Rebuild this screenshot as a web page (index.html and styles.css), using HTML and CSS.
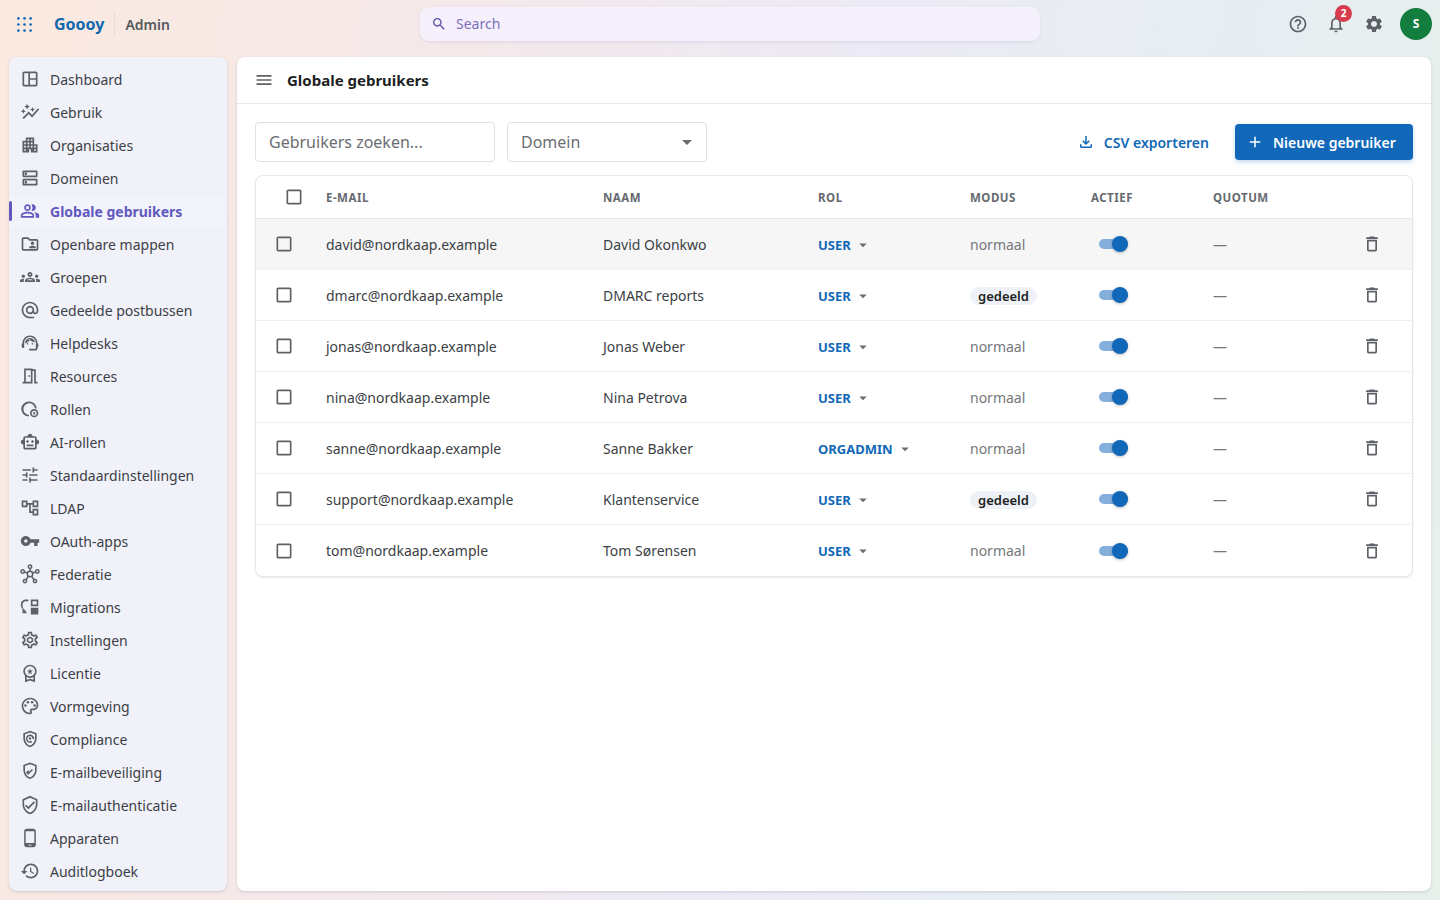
FILE: index.html
```html
<!DOCTYPE html>
<html lang="nl">

<head>
    <meta charset="UTF-8">
    <meta name="viewport" content="width=device-width, initial-scale=1.0">
    <title>Globale gebruikers</title>

    <link rel="stylesheet" href="styles.css">
</head>

<body>

    <header class="topbar">
        <div class="topbar--brand">
            <svg class="apps-icon" viewBox="0 0 16 16"><g>
                <circle cx="1.5" cy="1.5" r="1.4"/><circle cx="8" cy="1.5" r="1.4"/><circle cx="14.5" cy="1.5" r="1.4"/>
                <circle cx="1.5" cy="8" r="1.4"/><circle cx="8" cy="8" r="1.4"/><circle cx="14.5" cy="8" r="1.4"/>
                <circle cx="1.5" cy="14.5" r="1.4"/><circle cx="8" cy="14.5" r="1.4"/><circle cx="14.5" cy="14.5" r="1.4"/>
            </g></svg>
            <span class="logo">Goooy</span>
            <span class="topbar--product">Admin</span>
        </div>
        <div class="search">
            <svg class="search--icon" viewBox="0 0 24 24"><path d="M15.5 14h-.79l-.28-.27C15.41 12.59 16 11.11 16 9.5 16 5.91 13.09 3 9.5 3S3 5.91 3 9.5 5.91 16 9.5 16c1.61 0 3.09-.59 4.23-1.57l.27.28v.79l5 4.99L20.49 19l-4.99-5zm-6 0C7.01 14 5 11.99 5 9.5S7.01 5 9.5 5 14 7.01 14 9.5 11.99 14 9.5 14z"/></svg>
            <span>Search</span>
        </div>
        <div class="topbar--actions">
            <svg class="top-icon" viewBox="0 0 24 24"><path d="M11 18h2v-2h-2v2zm1-16C6.48 2 2 6.48 2 12s4.48 10 10 10 10-4.48 10-10S17.52 2 12 2zm0 18c-4.41 0-8-3.59-8-8s3.59-8 8-8 8 3.59 8 8-3.59 8-8 8zm0-14c-2.21 0-4 1.79-4 4h2c0-1.1.9-2 2-2s2 .9 2 2c0 2-3 1.75-3 5h2c0-2.25 3-2.5 3-5 0-2.21-1.79-4-4-4z"/></svg>
            <span class="bell">
                <svg class="top-icon" viewBox="0 0 24 24"><path d="M12 22c1.1 0 2-.9 2-2h-4c0 1.1.9 2 2 2zm6-6v-5c0-3.07-1.63-5.64-4.5-6.32V4c0-.83-.67-1.5-1.5-1.5s-1.5.67-1.5 1.5v.68C7.64 5.36 6 7.92 6 11v5l-2 2v1h16v-1l-2-2zm-2 1H8v-6c0-2.48 1.51-4.5 4-4.5s4 2.02 4 4.5v6z"/></svg>
                <span class="bell--count">2</span>
            </span>
            <svg class="top-icon" viewBox="0 0 24 24"><path d="M19.14 12.94c.04-.3.06-.61.06-.94 0-.32-.02-.64-.07-.94l2.03-1.58c.18-.14.23-.41.12-.61l-1.92-3.32c-.12-.22-.37-.29-.59-.22l-2.39.96c-.5-.38-1.03-.7-1.62-.94l-.36-2.54c-.04-.24-.24-.41-.48-.41h-3.84c-.24 0-.43.17-.47.41l-.36 2.54c-.59.24-1.13.57-1.62.94l-2.39-.96c-.22-.08-.47 0-.59.22L2.74 8.87c-.12.21-.08.47.12.61l2.03 1.58c-.05.3-.09.63-.09.94s.02.64.07.94l-2.03 1.58c-.18.14-.23.41-.12.61l1.92 3.32c.12.22.37.29.59.22l2.39-.96c.5.38 1.03.7 1.62.94l.36 2.54c.05.24.24.41.48.41h3.84c.24 0 .44-.17.47-.41l.36-2.54c.59-.24 1.13-.56 1.62-.94l2.39.96c.22.08.47 0 .59-.22l1.92-3.32c.12-.22.07-.47-.12-.61l-2.01-1.58zM12 15.6c-1.98 0-3.6-1.62-3.6-3.6s1.62-3.6 3.6-3.6 3.6 1.62 3.6 3.6-1.62 3.6-3.6 3.6z"/></svg>
            <span class="avatar">S</span>
        </div>
    </header>

    <div class="shell">
        <nav class="sidebar">
            <a class="nav-item" href="#"><svg viewBox="0 0 24 24"><path d="M5 3h14c1.1 0 2 .9 2 2v14c0 1.1-.9 2-2 2H5c-1.100 0-2-.9-2-2V5c0-1.100.9-2 2-2zm0 2v14h5V5H5zm7 0v6h7V5h-7zm0 8v6h7v-6h-7z"/></svg>Dashboard</a>
            <a class="nav-item" href="#"><svg viewBox="0 0 24 24"><path d="M14.06 9.94 12 9l2.06-.94L15 6l.94 2.06L18 9l-2.06.94L15 12l-.94-2.06zM4 14l.94-2.06L7 11l-2.06-.94L4 8l-.94 2.06L1 11l2.06.94L4 14zm4.5-5 1.09-2.41L12 5.5 9.59 4.41 8.5 2 7.41 4.41 5 5.5l2.41 1.09L8.500 9zm-4 11.5 6-6.010 4 4L23 8.930l-1.410-1.410-7.090 7.970-4-4L3 19l1.500 1.500z"/></svg>Gebruik</a>
            <a class="nav-item" href="#"><svg viewBox="0 0 24 24"><path d="M17 11V3H7v4H3v14h8v-4h2v4h8V11h-4zM7 19H5v-2h2v2zm0-4H5v-2h2v2zm0-4H5V9h2v2zm4 4H9v-2h2v2zm0-4H9V9h2v2zm0-4H9V5h2v2zm4 8h-2v-2h2v2zm0-4h-2V9h2v2zm0-4h-2V5h2v2zm4 12h-2v-2h2v2zm0-4h-2v-2h2v2z"/></svg>Organisaties</a>
            <a class="nav-item" href="#"><svg viewBox="0 0 24 24"><path d="M19 15v4H5v-4h14m1-2H4c-.55 0-1 .45-1 1v6c0 .55.45 1 1 1h16c.55 0 1-.45 1-1v-6c0-.55-.45-1-1-1zM7 18.500c-.82 0-1.500-.67-1.500-1.500s.68-1.500 1.500-1.500 1.500.67 1.500 1.500-.67 1.500-1.500 1.500zM19 5v4H5V5h14m1-2H4c-.55 0-1 .45-1 1v6c0 .55.45 1 1 1h16c.55 0 1-.45 1-1V4c0-.55-.45-1-1-1zM7 8.500c-.82 0-1.500-.67-1.500-1.500S6.180 5.500 7 5.500s1.500.68 1.500 1.500S7.830 8.500 7 8.500z"/></svg>Domeinen</a>
            <a class="nav-item nav-item--active" href="#"><svg viewBox="0 0 24 24"><path d="M16.670 13.130C18.040 14.060 19 15.320 19 17v3h4v-3c0-2.180-3.570-3.470-6.330-3.870zM15 12c2.210 0 4-1.790 4-4s-1.790-4-4-4c-.47 0-.91.1-1.330.24C14.500 5.270 15 6.580 15 8s-.5 2.730-1.330 3.760c.42.14.86.24 1.330.24zM9 12c2.210 0 4-1.790 4-4s-1.790-4-4-4-4 1.790-4 4 1.790 4 4 4zm0-6c1.100 0 2 .9 2 2s-.9 2-2 2-2-.9-2-2 .9-2 2-2zM9 13c-2.670 0-8 1.340-8 4v3h16v-3c0-2.660-5.330-4-8-4zm6 5H3v-.99C3.200 16.290 6.300 15 9 15s5.800 1.290 6 2v1z"/></svg>Globale gebruikers</a>
            <a class="nav-item" href="#"><svg viewBox="0 0 24 24"><path d="M20 6h-8l-2-2H4c-1.100 0-2 .9-2 2v12c0 1.100.9 2 2 2h16c1.100 0 2-.9 2-2V8c0-1.100-.9-2-2-2zm0 12H4V6h5.170l2 2H20v10zm-5-5c1.100 0 2-.9 2-2s-.9-2-2-2-2 .9-2 2 .9 2 2 2zm-4 4h8v-1c0-1.330-2.670-2-4-2s-4 .67-4 2v1z"/></svg>Openbare mappen</a>
            <a class="nav-item" href="#"><svg viewBox="0 0 24 24"><path d="M4 13c1.100 0 2-.9 2-2s-.9-2-2-2-2 .9-2 2 .9 2 2 2zm1.130 1.100c-.37-.06-.74-.1-1.130-.1-.99 0-1.930.21-2.780.58C.48 14.900 0 15.620 0 16.430V18h4.500v-1.610c0-.83.23-1.610.63-2.290zM20 13c1.100 0 2-.9 2-2s-.9-2-2-2-2 .9-2 2 .9 2 2 2zm4 3.430c0-.81-.48-1.530-1.220-1.850-.85-.37-1.790-.58-2.780-.58-.39 0-.76.04-1.130.1.4.68.63 1.460.63 2.290V18H24v-1.570zM16.240 13.650c-1.170-.52-2.610-.9-4.240-.9-1.630 0-3.070.39-4.240.9C6.680 14.130 6 15.210 6 16.390V18h12v-1.610c0-1.180-.68-2.260-1.760-2.740zM8.070 16c.09-.23.13-.39.91-.69.97-.38 1.990-.56 3.020-.56s2.050.18 3.020.56c.77.3.81.46.91.69H8.070zM12 8c.55 0 1 .45 1 1s-.45 1-1 1-1-.45-1-1 .45-1 1-1m0-2c-1.660 0-3 1.340-3 3s1.340 3 3 3 3-1.340 3-3-1.340-3-3-3z"/></svg>Groepen</a>
            <a class="nav-item" href="#"><svg viewBox="0 0 24 24"><path d="M12 2C6.480 2 2 6.480 2 12s4.480 10 10 10h5v-2h-5c-4.340 0-8-3.660-8-8s3.660-8 8-8 8 3.660 8 8v1.430c0 .79-.71 1.570-1.500 1.570s-1.500-.78-1.500-1.570V12c0-2.760-2.240-5-5-5s-5 2.240-5 5 2.240 5 5 5c1.380 0 2.640-.56 3.540-1.470.65.89 1.770 1.470 2.960 1.470 1.970 0 3.500-1.600 3.500-3.570V12c0-5.520-4.480-10-10-10zm0 13c-1.660 0-3-1.340-3-3s1.340-3 3-3 3 1.340 3 3-1.340 3-3 3z"/></svg>Gedeelde postbussen</a>
            <a class="nav-item" href="#"><svg viewBox="0 0 24 24"><path d="M21 12.220C21 6.730 16.740 3 12 3c-4.690 0-9 3.650-9 9.280-.6.34-1 .98-1 1.720v2c0 1.100.9 2 2 2h1v-6.100c0-3.870 3.130-7 7-7s7 3.130 7 7V19h-8v2h8c1.100 0 2-.9 2-2v-1.220c.59-.31 1-.92 1-1.640v-2.300c0-.7-.41-1.310-1-1.620z"/><circle cx="9" cy="13" r="1"/><circle cx="15" cy="13" r="1"/><path d="M18 11.030C17.520 8.180 15.040 6 12.050 6c-3.030 0-6.290 2.510-6.030 6.450 2.470-1.010 4.330-3.210 4.860-5.890 1.310 2.630 4 4.440 7.120 4.470zM12 7.800c-.6 1.700-1.900 3.200-4 4.100.2-2 1.700-3.900 4-3.900z" fill-rule="evenodd"/></svg>Helpdesks</a>
            <a class="nav-item" href="#"><svg viewBox="0 0 24 24"><path d="M19 19V4h-4V3H5v16H3v2h12V6h2v15h4v-2h-2zm-6 0H7V5h6v14zm-3-8h2v2h-2z"/></svg>Resources</a>
            <a class="nav-item" href="#"><svg viewBox="0 0 24 24"><path d="M11 3a9 9 0 0 0-1 18l1.200-1.900A7 7 0 1 1 18 11l2 .6A9 9 0 0 0 11 3z"/><path d="M17 12a5 5 0 1 0 0 10 5 5 0 0 0 0-10zm0 2a3 3 0 1 1 0 6 3 3 0 0 1 0-6z"/><path d="M16 15.500h2V17h-2zM15.700 17.500h2.600v1.200h-2.600z"/></svg>Rollen</a>
            <a class="nav-item" href="#"><svg viewBox="0 0 24 24"><path d="M20 9V7c0-1.100-.9-2-2-2h-3c0-1.660-1.340-3-3-3S9 3.340 9 5H6c-1.100 0-2 .9-2 2v2c-1.660 0-3 1.340-3 3s1.340 3 3 3v4c0 1.100.9 2 2 2h12c1.100 0 2-.9 2-2v-4c1.660 0 3-1.340 3-3s-1.340-3-3-3zm-2 10H6V7h12v12zm-9-6c-.83 0-1.500-.67-1.500-1.500S8.170 10 9 10s1.500.67 1.500 1.500S9.830 13 9 13zm7.500-1.500c0 .83-.67 1.500-1.500 1.500s-1.500-.67-1.500-1.500.67-1.500 1.500-1.500 1.500.67 1.500 1.500zM8 15h8v2H8v-2z"/></svg>AI-rollen</a>
            <a class="nav-item" href="#"><svg viewBox="0 0 24 24"><path d="M3 17v2h6v-2H3zM3 5v2h10V5H3zm10 16v-2h8v-2h-8v-2h-2v6h2zM7 9v2H3v2h4v2h2V9H7zm14 4v-2H11v2h10zm-6-4h2V7h4V5h-4V3h-2v6z"/></svg>Standaardinstellingen</a>
            <a class="nav-item" href="#"><svg viewBox="0 0 24 24"><path d="M22 11V3h-7v3H9V3H2v8h7V8h2v10h4v3h7v-8h-7v3h-2V8h2v3h7zM7 9H4V5h3v4zm10 6h3v4h-3v-4zm0-10h3v4h-3V5z"/></svg>LDAP</a>
            <a class="nav-item" href="#"><svg viewBox="0 0 24 24"><path d="M12.650 10C11.830 7.670 9.610 6 7 6c-3.310 0-6 2.690-6 6s2.690 6 6 6c2.610 0 4.830-1.670 5.650-4H17v4h4v-4h2v-4H12.650zM7 14c-1.100 0-2-.9-2-2s.9-2 2-2 2 .9 2 2-.9 2-2 2z"/></svg>OAuth-apps</a>
            <a class="nav-item" href="#"><svg class="line-icon" viewBox="0 0 24 24"><circle cx="12" cy="12" r="3.200"/><circle cx="12" cy="3.200" r="2"/><circle cx="3.200" cy="9" r="2"/><circle cx="20.800" cy="9" r="2"/><circle cx="6" cy="20.500" r="2"/><circle cx="18" cy="20.500" r="2"/><path d="M12 5.200v3.600M5.100 9.700l3.900 1.200M18.900 9.700 15 10.900M7.200 18.900l2.800-4.200M16.800 18.900 14 14.700"/></svg>Federatie</a>
            <a class="nav-item" href="#"><svg viewBox="0 0 24 24"><path d="M13 3h9v8h-9V3zm2 2v4h5V5h-5zM13 13h9v8h-9v-8z"/><path d="M10 3H7C3.700 3 1 5.700 1 9v1c0 2.500 1.500 4.600 3.700 5.500L3 13.800v5.700h5.700l-2-2 .3-1.300C4.800 15.900 3 13.300 3 10V9c0-2.200 1.800-4 4-4h3V3z"/></svg>Migrations</a>
            <a class="nav-item" href="#"><svg viewBox="0 0 24 24"><path d="M19.430 12.980c.04-.32.07-.64.07-.98 0-.34-.03-.66-.07-.98l2.110-1.650c.19-.15.24-.42.12-.64l-2-3.460c-.09-.16-.26-.25-.44-.25-.06 0-.12.01-.17.03l-2.490 1c-.52-.4-1.080-.73-1.690-.98l-.38-2.650C14.460 2.180 14.250 2 14 2h-4c-.25 0-.46.18-.49.42l-.38 2.650c-.61.25-1.170.59-1.690.98l-2.490-1c-.06-.02-.12-.03-.18-.03-.17 0-.34.09-.43.25l-2 3.460c-.13.22-.07.49.12.64l2.110 1.650c-.04.32-.07.65-.07.98 0 .33.03.66.07.98l-2.110 1.650c-.19.15-.24.42-.12.64l2 3.460c.09.16.26.25.44.25.06 0 .12-.01.17-.03l2.490-1c.52.4 1.080.73 1.690.98l.38 2.650c.03.24.24.42.49.42h4c.25 0 .46-.18.49-.42l.38-2.650c.61-.25 1.170-.59 1.690-.98l2.490 1c.06.02.12.03.18.03.17 0 .34-.09.43-.25l2-3.460c.12-.22.07-.49-.12-.64l-2.110-1.650zm-1.980-1.710c.04.31.05.52.05.73 0 .21-.02.43-.05.73l-.14 1.130.89.7 1.080.84-.7 1.210-1.270-.51-1.040-.42-.9.68c-.43.32-.84.56-1.250.73l-1.060.43-.16 1.130-.2 1.350h-1.400l-.19-1.350-.16-1.130-1.060-.43c-.43-.18-.83-.41-1.230-.71l-.91-.7-1.060.43-1.270.51-.7-1.210 1.080-.84.89-.7-.14-1.130c-.03-.31-.05-.54-.05-.74s.02-.43.05-.73l.14-1.130-.89-.7-1.080-.84.7-1.210 1.270.51 1.040.42.9-.68c.43-.32.84-.56 1.250-.73l1.060-.43.16-1.130.2-1.350h1.390l.19 1.350.16 1.130 1.060.43c.43.18.83.41 1.230.71l.91.7 1.060-.43 1.270-.51.7 1.210-1.070.85-.89.7.14 1.130zM12 8c-2.210 0-4 1.790-4 4s1.790 4 4 4 4-1.790 4-4-1.790-4-4-4zm0 6c-1.100 0-2-.9-2-2s.9-2 2-2 2 .9 2 2-.9 2-2 2z"/></svg>Instellingen</a>
            <a class="nav-item" href="#"><svg viewBox="0 0 24 24"><path d="M9.680 13.690 12 11.930l2.310 1.760-.88-2.850L15.750 9h-2.840L12 6.190 11.090 9H8.250l2.310 1.840-.88 2.850zM20 10c0-4.420-3.580-8-8-8s-8 3.580-8 8c0 2.030.76 3.870 2 5.280V23l6-2 6 2v-7.720c1.240-1.410 2-3.250 2-5.280zm-8-6c3.310 0 6 2.690 6 6s-2.690 6-6 6-6-2.690-6-6 2.690-6 6-6zm0 15-4 1.020v-3.100c1.180.68 2.540 1.080 4 1.080s2.820-.4 4-1.080v3.100L12 19z"/></svg>Licentie</a>
            <a class="nav-item" href="#"><svg viewBox="0 0 24 24"><path d="M12 22C6.490 22 2 17.510 2 12S6.490 2 12 2s10 4.040 10 9c0 3.310-2.690 6-6 6h-1.770c-.28 0-.5.22-.5.5 0 .12.05.23.13.33.41.47.64 1.060.64 1.670 0 1.380-1.120 2.500-2.500 2.500zm0-18c-4.410 0-8 3.590-8 8s3.590 8 8 8c.28 0 .5-.22.5-.5 0-.16-.08-.28-.14-.35-.41-.46-.63-1.050-.63-1.650 0-1.380 1.120-2.500 2.500-2.500H16c2.210 0 4-1.790 4-4 0-3.860-3.590-7-8-7z"/><circle cx="6.500" cy="11.500" r="1.500"/><circle cx="9.500" cy="7.500" r="1.500"/><circle cx="14.500" cy="7.500" r="1.500"/><circle cx="17.500" cy="11.500" r="1.500"/></svg>Vormgeving</a>
            <a class="nav-item" href="#"><svg viewBox="0 0 24 24"><path d="M12 2 4 5v6.090c0 5.050 3.410 9.760 8 10.910 4.590-1.150 8-5.860 8-10.910V5l-8-3zm6 9.090c0 4-2.550 7.700-6 8.830-3.450-1.130-6-4.820-6-8.830v-4.700l6-2.250 6 2.250v4.700z"/><path d="M12 6.500a5 5 0 1 0 2.600 9.300l-1-1.600A3.100 3.100 0 1 1 15 11.600V12h2v-.5a5 5 0 0 0-5-5zm0 3.500a1.500 1.500 0 1 0 0 3 1.500 1.500 0 0 0 0-3z"/></svg>Compliance</a>
            <a class="nav-item" href="#"><svg viewBox="0 0 24 24"><path d="M12 2 4 5v6.090c0 5.050 3.410 9.760 8 10.910 4.590-1.150 8-5.860 8-10.910V5l-8-3zm6 9.090c0 4-2.550 7.700-6 8.830-3.450-1.130-6-4.820-6-8.830v-4.700l6-2.250 6 2.250v4.700zm-8.050.1L8.530 12.600 7.100 14.030l2.850 2.850 5.660-5.660-1.410-1.410-3.250 3.250z" transform="translate(0 -1.500)"/></svg>E-mailbeveiliging</a>
            <a class="nav-item" href="#"><svg viewBox="0 0 24 24"><path d="M12 1 3 5v6c0 5.550 3.840 10.740 9 12 5.160-1.260 9-6.450 9-12V5l-9-4zm7 10c0 4.520-2.980 8.690-7 9.930-4.020-1.240-7-5.410-7-9.930V6.300l7-3.110 7 3.110V11zm-11.590.59L6 13l4 4 8-8-1.410-1.420L10 14.170z"/></svg>E-mailauthenticatie</a>
            <a class="nav-item" href="#"><svg viewBox="0 0 24 24"><path d="M16 1H8C6.340 1 5 2.340 5 4v16c0 1.660 1.340 3 3 3h8c1.660 0 3-1.340 3-3V4c0-1.660-1.340-3-3-3zm-2 20h-4v-1h4v1zm3.250-3H6.750V4h10.500v14z"/></svg>Apparaten</a>
            <a class="nav-item" href="#"><svg viewBox="0 0 24 24"><path d="M13 3c-4.970 0-9 4.030-9 9H1l3.890 3.890.07.14L9 12H6c0-3.870 3.130-7 7-7s7 3.130 7 7-3.130 7-7 7c-1.930 0-3.680-.79-4.940-2.060l-1.420 1.420C8.270 19.990 10.510 21 13 21c4.970 0 9-4.030 9-9s-4.030-9-9-9zm-1 5v5l4.280 2.540.72-1.210-3.500-2.080V8H12z"/></svg>Auditlogboek</a>
        </nav>

        <main class="page">
            <div class="page--title">
                <svg class="menu-icon" viewBox="0 0 24 24"><path d="M3 18h18v-2H3v2zm0-5h18v-2H3v2zm0-7v2h18V6H3z"/></svg>
                <h1>Globale gebruikers</h1>
            </div>
            <div class="page--body">
                <div class="filters">
                    <div class="field field--search">Gebruikers zoeken...</div>
                    <div class="field field--select">Domein <svg viewBox="0 0 24 24"><path d="M7 10l5 5 5-5z"/></svg></div>
                    <a class="btn-text" href="#"><svg viewBox="0 0 24 24"><path d="M18 15v3H6v-3H4v3c0 1.100.9 2 2 2h12c1.100 0 2-.9 2-2v-3h-2zm-1-4-1.410-1.410L13 12.170V4h-2v8.170L8.410 9.590 7 11l5 5 5-5z"/></svg>CSV exporteren</a>
                    <a class="btn-primary" href="#"><svg viewBox="0 0 24 24"><path d="M19 13h-6v6h-2v-6H5v-2h6V5h2v6h6v2z"/></svg>Nieuwe gebruiker</a>
                </div>

                <div class="table-wrap">
                    <table class="users">
                        <colgroup>
                            <col class="col-check"><col class="col-mail"><col class="col-name"><col class="col-role"><col class="col-mode"><col class="col-active"><col class="col-quota"><col>
                        </colgroup>
                        <thead>
                            <tr>
                                <th class="cell-check cell-check--head"><svg class="checkbox" viewBox="0 0 24 24"><path d="M19 5v14H5V5h14m0-2H5c-1.100 0-2 .9-2 2v14c0 1.100.9 2 2 2h14c1.100 0 2-.9 2-2V5c0-1.100-.9-2-2-2z"/></svg></th>
                                <th>E-mail</th>
                                <th>Naam</th>
                                <th>Rol</th>
                                <th>Modus</th>
                                <th>Actief</th>
                                <th>Quotum</th>
                                <th></th>
                            </tr>
                        </thead>
                        <tbody>
                            <tr class="row--hover">
                                <td class="cell-check"><svg class="checkbox" viewBox="0 0 24 24"><path d="M19 5v14H5V5h14m0-2H5c-1.100 0-2 .9-2 2v14c0 1.100.9 2 2 2h14c1.100 0 2-.9 2-2V5c0-1.100-.9-2-2-2z"/></svg></td>
                                <td>david@nordkaap.example</td>
                                <td>David Okonkwo</td>
                                <td><span class="role">USER<svg viewBox="0 0 24 24"><path d="M7 10l5 5 5-5z"/></svg></span></td>
                                <td class="mode">normaal</td>
                                <td><span class="switch"></span></td>
                                <td class="quota">—</td>
                                <td class="cell-delete"><svg viewBox="0 0 24 24"><path d="M6 19c0 1.100.9 2 2 2h8c1.100 0 2-.9 2-2V7H6v12zM8 9h8v10H8V9zm7.500-5-1-1h-5l-1 1H5v2h14V4z"/></svg></td>
                            </tr>
                            <tr>
                                <td class="cell-check"><svg class="checkbox" viewBox="0 0 24 24"><path d="M19 5v14H5V5h14m0-2H5c-1.100 0-2 .9-2 2v14c0 1.100.9 2 2 2h14c1.100 0 2-.9 2-2V5c0-1.100-.9-2-2-2z"/></svg></td>
                                <td>dmarc@nordkaap.example</td>
                                <td>DMARC reports</td>
                                <td><span class="role">USER<svg viewBox="0 0 24 24"><path d="M7 10l5 5 5-5z"/></svg></span></td>
                                <td class="mode"><span class="chip">gedeeld</span></td>
                                <td><span class="switch"></span></td>
                                <td class="quota">—</td>
                                <td class="cell-delete"><svg viewBox="0 0 24 24"><path d="M6 19c0 1.100.9 2 2 2h8c1.100 0 2-.9 2-2V7H6v12zM8 9h8v10H8V9zm7.500-5-1-1h-5l-1 1H5v2h14V4z"/></svg></td>
                            </tr>
                            <tr>
                                <td class="cell-check"><svg class="checkbox" viewBox="0 0 24 24"><path d="M19 5v14H5V5h14m0-2H5c-1.100 0-2 .9-2 2v14c0 1.100.9 2 2 2h14c1.100 0 2-.9 2-2V5c0-1.100-.9-2-2-2z"/></svg></td>
                                <td>jonas@nordkaap.example</td>
                                <td>Jonas Weber</td>
                                <td><span class="role">USER<svg viewBox="0 0 24 24"><path d="M7 10l5 5 5-5z"/></svg></span></td>
                                <td class="mode">normaal</td>
                                <td><span class="switch"></span></td>
                                <td class="quota">—</td>
                                <td class="cell-delete"><svg viewBox="0 0 24 24"><path d="M6 19c0 1.100.9 2 2 2h8c1.100 0 2-.9 2-2V7H6v12zM8 9h8v10H8V9zm7.500-5-1-1h-5l-1 1H5v2h14V4z"/></svg></td>
                            </tr>
                            <tr>
                                <td class="cell-check"><svg class="checkbox" viewBox="0 0 24 24"><path d="M19 5v14H5V5h14m0-2H5c-1.100 0-2 .9-2 2v14c0 1.100.9 2 2 2h14c1.100 0 2-.9 2-2V5c0-1.100-.9-2-2-2z"/></svg></td>
                                <td>nina@nordkaap.example</td>
                                <td>Nina Petrova</td>
                                <td><span class="role">USER<svg viewBox="0 0 24 24"><path d="M7 10l5 5 5-5z"/></svg></span></td>
                                <td class="mode">normaal</td>
                                <td><span class="switch"></span></td>
                                <td class="quota">—</td>
                                <td class="cell-delete"><svg viewBox="0 0 24 24"><path d="M6 19c0 1.100.9 2 2 2h8c1.100 0 2-.9 2-2V7H6v12zM8 9h8v10H8V9zm7.500-5-1-1h-5l-1 1H5v2h14V4z"/></svg></td>
                            </tr>
                            <tr>
                                <td class="cell-check"><svg class="checkbox" viewBox="0 0 24 24"><path d="M19 5v14H5V5h14m0-2H5c-1.100 0-2 .9-2 2v14c0 1.100.9 2 2 2h14c1.100 0 2-.9 2-2V5c0-1.100-.9-2-2-2z"/></svg></td>
                                <td>sanne@nordkaap.example</td>
                                <td>Sanne Bakker</td>
                                <td><span class="role">ORGADMIN<svg viewBox="0 0 24 24"><path d="M7 10l5 5 5-5z"/></svg></span></td>
                                <td class="mode">normaal</td>
                                <td><span class="switch"></span></td>
                                <td class="quota">—</td>
                                <td class="cell-delete"><svg viewBox="0 0 24 24"><path d="M6 19c0 1.100.9 2 2 2h8c1.100 0 2-.9 2-2V7H6v12zM8 9h8v10H8V9zm7.500-5-1-1h-5l-1 1H5v2h14V4z"/></svg></td>
                            </tr>
                            <tr>
                                <td class="cell-check"><svg class="checkbox" viewBox="0 0 24 24"><path d="M19 5v14H5V5h14m0-2H5c-1.100 0-2 .9-2 2v14c0 1.100.9 2 2 2h14c1.100 0 2-.9 2-2V5c0-1.100-.9-2-2-2z"/></svg></td>
                                <td>support@nordkaap.example</td>
                                <td>Klantenservice</td>
                                <td><span class="role">USER<svg viewBox="0 0 24 24"><path d="M7 10l5 5 5-5z"/></svg></span></td>
                                <td class="mode"><span class="chip">gedeeld</span></td>
                                <td><span class="switch"></span></td>
                                <td class="quota">—</td>
                                <td class="cell-delete"><svg viewBox="0 0 24 24"><path d="M6 19c0 1.100.9 2 2 2h8c1.100 0 2-.9 2-2V7H6v12zM8 9h8v10H8V9zm7.500-5-1-1h-5l-1 1H5v2h14V4z"/></svg></td>
                            </tr>
                            <tr>
                                <td class="cell-check"><svg class="checkbox" viewBox="0 0 24 24"><path d="M19 5v14H5V5h14m0-2H5c-1.100 0-2 .9-2 2v14c0 1.100.9 2 2 2h14c1.100 0 2-.9 2-2V5c0-1.100-.9-2-2-2z"/></svg></td>
                                <td>tom@nordkaap.example</td>
                                <td>Tom Sørensen</td>
                                <td><span class="role">USER<svg viewBox="0 0 24 24"><path d="M7 10l5 5 5-5z"/></svg></span></td>
                                <td class="mode">normaal</td>
                                <td><span class="switch"></span></td>
                                <td class="quota">—</td>
                                <td class="cell-delete"><svg viewBox="0 0 24 24"><path d="M6 19c0 1.100.9 2 2 2h8c1.100 0 2-.9 2-2V7H6v12zM8 9h8v10H8V9zm7.500-5-1-1h-5l-1 1H5v2h14V4z"/></svg></td>
                            </tr>
                        </tbody>
                    </table>
                </div>
            </div>
        </main>
    </div>

</body>

</html>
```

FILE: styles.css
```css
/* Variables */
:root {
    --color-blue: #1168b8;
    --color-purple: #6159bf;
    --color-text: #3c3f45;
    --color-muted: #666a70;
    --color-icon: #5d6066;
    --color-line: #e6e7ea;
}

/* Base */
* {
    box-sizing: border-box;
}

body {
    margin: 0;
    height: 100vh;
    overflow: hidden;
    display: flex;
    flex-direction: column;
    font-family: "Noto Sans", sans-serif;
    font-size: 14px;
    color: var(--color-text);
    background: linear-gradient(100deg, #fae9df 0%, #f4e8ea 30%, #eceaf5 55%, #e6eef2 80%, #e8f0ea 100%);
}

a {
    text-decoration: none;
    color: inherit;
}

/* Top bar */
.topbar {
    flex: none;
    height: 48px;
    display: flex;
    align-items: center;
    position: relative;
    padding: 0 8px 0 17px;
}

.topbar--brand {
    width: 403px;
    display: flex;
    align-items: center;
}

.apps-icon {
    width: 15px;
    height: 15px;
    fill: var(--color-blue);
}

.logo {
    margin-left: 22px;
    padding-right: 10px;
    border-right: 1px solid #e4dcd8;
    font-size: 16px;
    font-weight: 700;
    line-height: 24px;
    color: #1168ae;
}

.topbar--product {
    margin-left: 10px;
    font-size: 14px;
    font-weight: 600;
    color: #55575b;
}

.search {
    width: 620px;
    height: 34px;
    display: flex;
    align-items: center;
    gap: 9px;
    padding: 0 11px;
    margin-top: -1px;
    border-radius: 9px;
    background: rgba(245, 241, 253, 0.9);
    box-shadow: 0 1px 3px rgba(90, 80, 150, 0.12);
    color: #7a70bd;
}

.search--icon {
    width: 16px;
    height: 16px;
    fill: #5a52a8;
}

.topbar--actions {
    margin-left: auto;
    display: flex;
    align-items: center;
}

.top-icon {
    width: 20px;
    height: 20px;
    fill: var(--color-icon);
    display: block;
}

.topbar--actions > .top-icon:first-child {
    margin-right: 18px;
}

.bell {
    position: relative;
    margin-right: 18px;
}

.bell--count {
    position: absolute;
    top: -9px;
    left: 9px;
    width: 17px;
    height: 17px;
    border-radius: 50%;
    background: #d83a4e;
    color: #ffffff;
    font-size: 10px;
    font-weight: 700;
    line-height: 17px;
    text-align: center;
}

.avatar {
    width: 32px;
    height: 32px;
    margin-left: 16px;
    border-radius: 50%;
    background: #137d3f;
    color: #ffffff;
    font-size: 12px;
    font-weight: 700;
    line-height: 32px;
    text-align: center;
}

/* Shell */
.shell {
    flex: 1;
    min-height: 0;
    display: flex;
    gap: 10px;
    padding: 9px;
}

/* Sidebar */
.sidebar {
    flex: none;
    width: 218px;
    padding: 5.5px 0;
    border-radius: 8px;
    background: #f1f1f9;
    box-shadow: 0 1px 3px rgba(40, 40, 80, 0.16);
}

.nav-item {
    position: relative;
    height: 33px;
    display: flex;
    align-items: center;
    gap: 10px;
    padding-left: 11px;
    font-size: 14px;
    color: var(--color-text);
}

.nav-item svg {
    flex: none;
    width: 20px;
    height: 20px;
    fill: var(--color-icon);
}

.nav-item .line-icon {
    fill: none;
    stroke: var(--color-icon);
    stroke-width: 1.8;
}

.nav-item--active {
    font-weight: 700;
    color: var(--color-purple);
    background: #f3f3fb;
}

.nav-item--active svg {
    fill: var(--color-purple);
}

.nav-item--active::before {
    content: "";
    position: absolute;
    left: 0;
    top: 6px;
    width: 3px;
    height: 20px;
    border-radius: 2px;
    background: var(--color-purple);
}

/* Page */
.page {
    flex: 1;
    min-width: 0;
    display: flex;
    flex-direction: column;
    border-radius: 8px;
    background: #ffffff;
    box-shadow: 0 1px 3px rgba(40, 40, 80, 0.16);
}

.page--title {
    flex: none;
    height: 47px;
    display: flex;
    align-items: center;
    gap: 13px;
    padding-left: 17px;
    border-bottom: 1px solid var(--color-line);
}

.page--title h1 {
    margin: 0;
    font-size: 15px;
    font-weight: 700;
    color: #1d1f23;
}

.menu-icon {
    width: 20px;
    height: 20px;
    fill: var(--color-icon);
}

.page--body {
    padding: 18px 18px 0;
}

/* Filters */
.filters {
    height: 40px;
    display: flex;
    align-items: center;
    gap: 12px;
    margin-bottom: 13px;
}

.field {
    height: 40px;
    display: flex;
    align-items: center;
    padding: 0 13px;
    border: 1px solid #dfe0e3;
    border-radius: 4px;
    font-size: 16px;
    color: #6a6d72;
}

.field--search {
    width: 240px;
}

.field--select {
    width: 200px;
    justify-content: space-between;
    padding-right: 7px;
}

.field--select svg {
    width: 24px;
    height: 24px;
    fill: #6a6d72;
}

.btn-text {
    margin-left: auto;
    display: flex;
    align-items: center;
    gap: 9px;
    font-weight: 600;
    color: var(--color-blue);
}

.btn-text svg {
    width: 18px;
    height: 18px;
    fill: var(--color-blue);
}

.btn-primary {
    width: 178px;
    height: 36px;
    margin-left: 14px;
    display: flex;
    align-items: center;
    gap: 9px;
    padding-left: 11px;
    border-radius: 4px;
    background: var(--color-blue);
    box-shadow: 0 2px 4px rgba(17, 104, 184, 0.25);
    font-weight: 600;
    color: #ffffff;
}

.btn-primary svg {
    width: 18px;
    height: 18px;
    fill: #ffffff;
}

/* Table */
.table-wrap {
    border: 1px solid var(--color-line);
    border-radius: 8px;
    box-shadow: 0 1px 2px rgba(40, 40, 80, 0.1);
    overflow: hidden;
}

.users {
    width: 100%;
    border-collapse: separate;
    border-spacing: 0;
    table-layout: fixed;
}

.col-check { width: 70px; }
.col-mail { width: 277px; }
.col-name { width: 215px; }
.col-role { width: 152px; }
.col-mode { width: 121px; }
.col-active { width: 122px; }
.col-quota { width: 100px; }

.users th {
    height: 43px;
    padding: 0;
    border-bottom: 1px solid var(--color-line);
    text-align: left;
    font-size: 11.5px;
    font-weight: 700;
    letter-spacing: 0.5px;
    text-transform: uppercase;
    color: var(--color-muted);
}

.users td {
    height: 51px;
    padding: 0;
    border-bottom: 1px solid #eeeff1;
    color: var(--color-text);
}

.users tbody tr:last-child td {
    border-bottom: 0;
}

.row--hover td {
    background: #f6f6f7;
}

.checkbox {
    display: block;
    width: 20px;
    height: 20px;
    fill: #5f6166;
}

.users .cell-check {
    padding-left: 18px;
}

.users .cell-check--head {
    padding-left: 28px;
}

.role {
    display: inline-flex;
    align-items: center;
    gap: 3px;
    font-size: 13px;
    font-weight: 700;
    color: var(--color-blue);
}

.role svg {
    width: 18px;
    height: 18px;
    fill: #6a6d72;
}

.users .mode {
    color: #74777c;
}

.chip {
    display: inline-block;
    height: 18px;
    padding: 0 8px;
    border-radius: 9px;
    background: #eef2f7;
    font-size: 13px;
    font-weight: 600;
    line-height: 18px;
    color: #1d1f23;
}

.switch {
    position: relative;
    display: block;
    width: 29px;
    height: 10px;
    margin-left: 8px;
    border-radius: 5px;
    background: #84aedb;
}

.switch::after {
    content: "";
    position: absolute;
    top: -3px;
    right: 0;
    width: 16px;
    height: 16px;
    border-radius: 50%;
    background: var(--color-blue);
    box-shadow: 0 1px 3px rgba(0, 0, 0, 0.25);
}

.users .quota {
    color: #74777c;
}

.cell-delete svg {
    display: block;
    width: 20px;
    height: 20px;
    margin-left: 49px;
    fill: var(--color-icon);
}
```
